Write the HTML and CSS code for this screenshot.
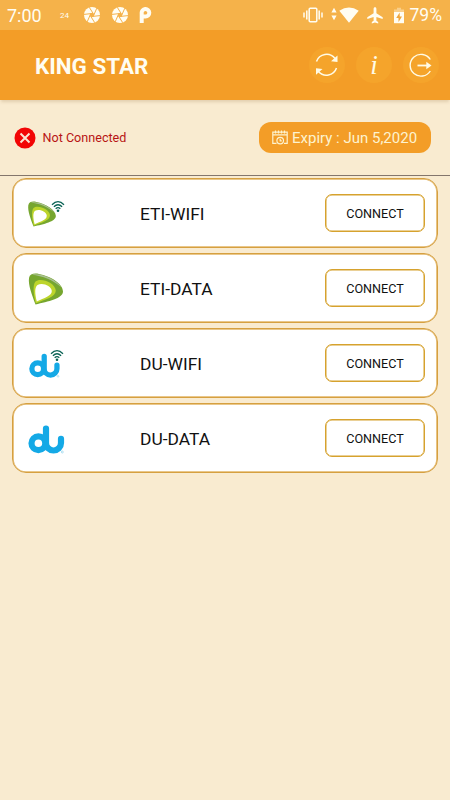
FILE: index.html
```
<!DOCTYPE html>
<html lang="en">
<head>
  <meta charset="UTF-8">
  <meta name="viewport" content="width=device-width, initial-scale=1.0">
  <title>King Star</title>
  <link rel="stylesheet" href="styles.css">
</head>

<body>

<!-- Shared shapes -->
<svg class="defs" width="0" height="0">
  <symbol id="shutter" viewBox="0 0 16 16">
    <circle cx="8" cy="8" r="8" fill="#fffdf2"/>
    <path d="M5.2 .2L9 6.2M12.8 1.2L9.8 8M16 8.6L8.8 9.4M10.8 15.8L7 9.8M3.2 14.8L6.2 8M0 7.4L7.2 6.6" stroke="#f5b24a" stroke-width="1"/>
    <circle cx="8" cy="8" r="2.3" fill="#f5b24a"/>
  </symbol>
  <symbol id="leaf" viewBox="0 0 48 48">
    <path d="M15.500 40.500C12 31 8 21 9 14C9.800 9.800 14 9 19 10C30 12 43 19.500 43 27.500C43 34.500 28 37.500 15.500 40.500Z" fill="#76a62f"/>
    <path d="M12 10.800C20 8.500 36 15 41.500 23.500C34 16.500 22 11.800 12 10.800Z" fill="#a9bf94"/>
    <path d="M15.800 39.300C13.500 30 12.500 21 15.500 17.500C20 13 35.500 18.500 35.800 26.500C35.800 33 25 35.500 15.800 39.300Z" fill="#bdd52c"/>
    <path d="M16.800 37.500C14.800 29 14.500 23.500 17.500 21C22 18 31.500 21.500 31.800 27C32 32 24 34 16.800 37.500Z" fill="#fff"/>
  </symbol>
  <symbol id="du" viewBox="0 0 48 48">
    <g fill="none" stroke="#14a9e6" stroke-width="6.200" stroke-linecap="round">
      <circle cx="18.4" cy="29.2" r="6.900"/>
      <path d="M26 14.5V29a7.5 7.5 0 0 0 15 0V24.8"/>
    </g>
    <circle cx="42.3" cy="38" r="1" fill="none" stroke="#7fcbe8" stroke-width=".6"/>
  </symbol>
  <symbol id="signal" viewBox="0 0 14 12">
    <path d="M1 4.2Q7-1.9 13 4.2M2.9 6.3Q7 2.2 11.1 6.3M4.7 8.3Q7 6 9.3 8.3" fill="none" stroke="#0b6355" stroke-width="1.3"/>
    <circle cx="7" cy="10.2" r="1.3" fill="#0b6355"/>
  </symbol>
</svg>

<!-- Phone status bar -->
<div class="status-bar">
  <span class="clock">7:00</span>
  <span class="temp">24</span>
  <svg class="shutter" width="16" height="16"><use href="#shutter"/></svg>
  <svg class="shutter" width="16" height="16"><use href="#shutter"/></svg>
  <svg width="13" height="16" viewBox="0 0 13 16">
    <path d="M2.7 14V6.3A3.8 3.8 0 1 1 6.5 9.6" fill="none" stroke="#fffdf2" stroke-width="4" stroke-linecap="square"/>
  </svg>
  <div class="status-right">
    <svg width="20" height="16" viewBox="0 0 20 16" fill="none" stroke="#fffdf2" stroke-width="1.5">
      <rect x="6.2" y="1.3" width="7.6" height="13.4" rx="1"/>
      <path d="M3.8 3.5v9M1 5.5v5M16.2 3.5v9M19 5.5v5"/>
    </svg>
    <svg class="arrows" width="6" height="14" viewBox="0 0 6 14" fill="#fffdf2">
      <path d="M3 .8L5.6 5.5H.4zM3 13.2L5.6 8.5H.4z"/>
    </svg>
    <svg width="20" height="16" viewBox="0 0 20 16" fill="#fffdf2">
      <path d="M.3 3.8Q10-3 19.7 3.8L10 15.8z"/>
    </svg>
    <svg class="plane" width="16" height="17" viewBox="0 0 16 17" fill="#fffdf2">
      <path d="M8 .3c.9 0 1.4.7 1.4 1.6v4.4l6.3 4v1.6L9.4 10v3.8l1.8 1.3v1.3L8 15.5l-3.2.9v-1.3l1.8-1.3V10L.3 11.9v-1.6l6.3-4V1.9C6.6 1 7.1.3 8 .3z"/>
    </svg>
    <svg class="battery" width="10" height="17" viewBox="0 0 10 17">
      <path d="M3 .8h4v1.7h3V6H0V2.5h3z" fill="#f9cf8a"/>
      <path d="M0 5h10v11.2H0z" fill="#fffdf2"/>
      <path d="M5.7 5.5L2.2 11h2.3v4L8 9.5H5.7z" fill="#f0a63c"/>
    </svg>
    <span class="percent">79%</span>
  </div>
</div>

<!-- App header -->
<header class="header">
  <h1>KING STAR</h1>
  <button class="round" aria-label="Refresh">
    <svg width="36" height="36" viewBox="0 0 36 36" fill="none" stroke="#fffbe6" stroke-width="1.5">
      <path d="M7.5 14.5A10.6 10.6 0 0 1 26 11.5M27.5 21A10.6 10.6 0 0 1 9.5 24.5"/>
      <path d="M28.5 8.5V15L22 14.3zM7 27.7V21.2L13.5 22z" fill="#fffbe6" stroke="none"/>
    </svg>
  </button>
  <button class="round" aria-label="Info"><span class="info">i</span></button>
  <button class="round" aria-label="Log out">
    <svg width="36" height="36" viewBox="0 0 36 36" fill="none" stroke="#fffbe6" stroke-width="1.4">
      <path d="M27.3 12.5A10.9 10.9 0 1 0 27.3 24"/>
      <path d="M14.5 18.5H25" stroke-width="1.8"/>
      <path d="M23.3 14.8L28.5 18.5L23.3 22.2z" fill="#fffbe6" stroke="none"/>
    </svg>
  </button>
</header>

<!-- Connection state -->
<section class="info-bar">
  <svg width="22" height="22" viewBox="0 0 22 22">
    <circle cx="11" cy="11" r="10.5" fill="#f20505"/>
    <path d="M6.5 6.5l9 9M15.5 6.5l-9 9" stroke="#fbe3d3" stroke-width="2"/>
  </svg>
  <span class="state">Not Connected</span>
  <div class="expiry">
    <svg width="16" height="15" viewBox="0 0 16 15" fill="none" stroke="#fdf3cf" stroke-width="1.2">
      <path d="M4.5 13.4H.8V2.2H15.2V13.4H12M.8 4.8H15.2"/>
      <path d="M3.5 .4V3.6M6.5 .4V3.6M9.5 .4V3.6M12.5 .4V3.6"/>
      <circle cx="8.2" cy="10.6" r="3.3"/>
      <path d="M8.2 8.8V10.8H9.8"/>
    </svg>
    <span>Expiry : Jun 5,2020</span>
  </div>
</section>

<!-- Server list -->
<main class="servers">
  <div class="card">
    <svg width="48" height="48" viewBox="0 0 48 48">
      <use href="#leaf" x="1" y="4.8" width="38.9" height="38.9"/>
      <use href="#signal" x="31" y="11.5" width="14" height="12"/>
    </svg>
    <span class="name">ETI-WIFI</span>
    <button class="connect">CONNECT</button>
  </div>
  <div class="card">
    <svg width="48" height="48"><use href="#leaf"/></svg>
    <span class="name">ETI-DATA</span>
    <button class="connect">CONNECT</button>
  </div>
  <div class="card">
    <svg width="48" height="48" viewBox="0 0 48 48">
      <use href="#du" x="2.1" y="5" width="40.8" height="40.8"/>
      <use href="#signal" x="30" y="10.5" width="14" height="12"/>
    </svg>
    <span class="name">DU-WIFI</span>
    <button class="connect">CONNECT</button>
  </div>
  <div class="card">
    <svg width="48" height="48"><use href="#du"/></svg>
    <span class="name">DU-DATA</span>
    <button class="connect">CONNECT</button>
  </div>
</main>

</body>
</html>
```
FILE: styles.css
```
* {
  box-sizing: border-box;
}

body {
  font-family: Roboto, sans-serif;
  background-color: #f9ebd0;
  margin: 0;
  min-height: 800px;
}

svg {
  display: block;
  flex: none;
}

.defs {
  position: absolute;
}

button {
  font-family: inherit;
  padding: 0;
  cursor: pointer;
}

/* Status bar */
.status-bar {
  display: flex;
  align-items: center;
  height: 30px;
  padding: 0 8px 0 7px;
  background-color: #f5b24a;
  color: #fffdf2;
}

.clock {
  width: 53px;
  font-size: 18px;
}

.temp {
  width: 24px;
  font-size: 8px;
}

.shutter {
  margin-right: 11.5px;
}

.status-right {
  display: flex;
  align-items: center;
  margin-left: auto;
}

.arrows {
  margin: 0 2px 3px 8px;
}

.plane {
  margin-left: 8px;
}

.battery {
  margin: 0 6px 0 11px;
}

.percent {
  font-size: 17.5px;
}

/* Header */
.header {
  display: flex;
  align-items: center;
  gap: 11px;
  height: 70px;
  padding: 0 11px 0 35px;
  background-color: #f39d27;
  box-shadow: 0 3px 3px -1px rgba(120, 80, 20, 0.18);
}

h1 {
  flex: 1;
  margin: 2px 0 0;
  font-size: 22.4px;
  font-weight: 700;
  color: #fffdf2;
}

.round {
  width: 36px;
  height: 36px;
  border: none;
  border-radius: 50%;
  background-color: #f5a42b;
}

.info {
  font-family: "Liberation Serif", serif;
  font-style: italic;
  font-size: 27px;
  line-height: 36px;
  color: #fffbe6;
}

/* Connection state */
.info-bar {
  display: flex;
  align-items: center;
  height: 76px;
  padding: 0 19px 0 14px;
  border-bottom: 1px solid #84766c;
}

.state {
  margin: 0 0 0 6.5px;
  font-size: 12.6px;
  color: #b81414;
}

.expiry {
  display: flex;
  align-items: center;
  gap: 4px;
  width: 172px;
  height: 31px;
  margin-left: auto;
  padding-left: 13px;
  border-radius: 12px;
  background-color: #f39d27;
  color: #fdf3cf;
  font-size: 15px;
  white-space: nowrap;
}

/* Server list */
.servers {
  display: flex;
  flex-direction: column;
  gap: 5px;
  padding: 2px 12px;
}

.card {
  display: flex;
  align-items: center;
  height: 70px;
  padding: 0 12px 0 7px;
  border: 1px solid #d6a040;
  border-radius: 14px;
  background-color: #fff;
  box-shadow: inset 0 0 0 0.8px #e2b566;
}

.name {
  flex: 1;
  margin: 2px 0 0 72px;
  font-size: 17.4px;
  color: #111;
}

.connect {
  width: 100px;
  height: 38px;
  border: 1px solid #d6a22e;
  border-radius: 7px;
  background-color: #fff;
  box-shadow: inset 0 0 0 0.5px #d6a22e;
  color: #111;
  font-size: 12.6px;
}
```
